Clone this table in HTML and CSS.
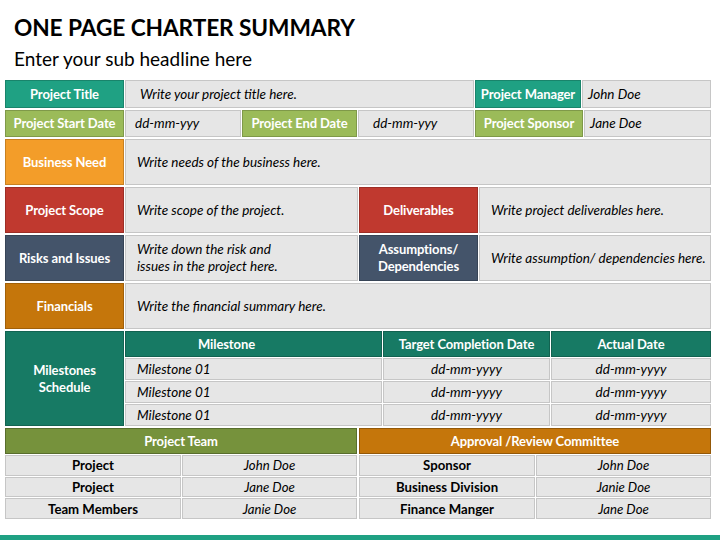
FILE: index.html
```html
<!DOCTYPE html>
<html>
<head>
<meta charset="utf-8">
<link rel="stylesheet" href="styles.css">
</head>
<body>
<div class="page">
  <h1 class="title">ONE PAGE CHARTER SUMMARY</h1>
  <p class="sub">Enter your sub headline here</p>

  <div class="sheet">
    <div class="row r1">
      <div class="lab teal">Project Title</div>
      <div class="val pad14">Write your project title here.</div>
      <div class="lab teal">Project Manager</div>
      <div class="val pad5">John Doe</div>
    </div>

    <div class="row r2">
      <div class="lab green">Project Start Date</div>
      <div class="val pad9">dd-mm-yyy</div>
      <div class="lab green">Project End Date</div>
      <div class="val pad14">dd-mm-yyy</div>
      <div class="lab green">Project Sponsor</div>
      <div class="val pad5">Jane Doe</div>
    </div>

    <div class="row r3">
      <div class="lab orange">Business Need</div>
      <div class="val pad12">Write needs of the business here.</div>
    </div>

    <div class="row r4">
      <div class="lab red">Project Scope</div>
      <div class="val pad12">Write scope of the project.</div>
      <div class="lab red">Deliverables</div>
      <div class="val pad12">Write project deliverables here.</div>
    </div>

    <div class="row r4">
      <div class="lab slate">Risks and Issues</div>
      <div class="val pad12">Write down the risk and<br>issues in the project here.</div>
      <div class="lab slate">Assumptions/<br>Dependencies</div>
      <div class="val pad12">Write assumption/ dependencies here.</div>
    </div>

    <div class="row r3">
      <div class="lab amber">Financials</div>
      <div class="val pad12">Write the financial summary here.</div>
    </div>

    <div class="row ms">
      <div class="lab dteal">Milestones<br>Schedule</div>
      <div class="mtable">
        <div class="mh mh-first">Milestone</div>
        <div class="mh">Target Completion Date</div>
        <div class="mh">Actual Date</div>
        <div class="mc left">Milestone 01</div>
        <div class="mc">dd-mm-yyyy</div>
        <div class="mc">dd-mm-yyyy</div>
        <div class="mc left">Milestone 01</div>
        <div class="mc">dd-mm-yyyy</div>
        <div class="mc">dd-mm-yyyy</div>
        <div class="mc left">Milestone 01</div>
        <div class="mc">dd-mm-yyyy</div>
        <div class="mc">dd-mm-yyyy</div>
      </div>
    </div>

    <div class="row team">
      <div class="ttable tleft">
        <div class="th olive">Project Team</div>
        <div class="tk">Project</div><div class="tv">John Doe</div>
        <div class="tk">Project</div><div class="tv">Jane Doe</div>
        <div class="tk">Team Members</div><div class="tv">Janie Doe</div>
      </div>
      <div class="ttable tright">
        <div class="th amber">Approval /Review Committee</div>
        <div class="tk">Sponsor</div><div class="tv">John Doe</div>
        <div class="tk">Business Division</div><div class="tv">Janie Doe</div>
        <div class="tk">Finance Manger</div><div class="tv">Jane Doe</div>
      </div>
    </div>
  </div>
</div>
<div class="bar"></div>
</body>
</html>
```
FILE: styles.css
```css
* { box-sizing: border-box; }
html, body { margin: 0; padding: 0; background: #ffffff; }
body {
  width: 720px;
  height: 540px;
  overflow: hidden;
  position: relative;
  font-family: Lato, "Open Sans", sans-serif;
  color: #000;
}
.page { padding: 0; }
.title {
  margin: 0;
  padding: 13px 0 0 14px;
  font-size: 22.7px;
  line-height: 29px;
  font-weight: 700;
  letter-spacing: -0.1px;
}
.sub {
  margin: 0;
  padding: 4px 0 0 14px;
  font-size: 19px;
  line-height: 25px;
  font-weight: 400;
}
.sheet {
  margin: 9px 0 0 5px;
  width: 706px;
  display: flex;
  flex-direction: column;
  gap: 2px;
}
.row { display: grid; gap: 1px; }
.r1 { grid-template-columns: 119px 349px 106px 1fr; height: 28px; }
.r2 { grid-template-columns: 119px 116px 115px 116px 108px 1fr; height: 27px; }
.r3 { grid-template-columns: 119px 1fr; height: 46px; }
.r4 { grid-template-columns: 119px 233px 119px 1fr; height: 46px; }
.ms { grid-template-columns: 119px 1fr; height: 95px; }
.team { grid-template-columns: 352px 1fr; gap: 2px; height: 91px; }

.lab {
  display: flex;
  align-items: center;
  justify-content: center;
  text-align: center;
  color: #ffffff;
  font-weight: 700;
  font-size: 13px;
  line-height: 17px;
  border: 1px solid rgba(0,0,0,0.18);
  letter-spacing: -0.1px;
}
.val {
  display: flex;
  align-items: center;
  background: #e6e6e6;
  border: 1px solid #c6c6c6;
  font-style: italic;
  font-size: 13.5px;
  line-height: 17px;
}
.pad5 { padding-left: 5px; }
.pad9 { padding-left: 9px; }
.pad12 { padding-left: 11px; }
.pad14 { padding-left: 14px; }

.teal { background: #1fa183; }
.green { background: #9bbb59; }
.orange { background: #f39d29; }
.red { background: #c0392f; }
.slate { background: #44546a; }
.amber { background: #c5760b; }
.dteal { background: #177a64; }
.olive { background: #76923c; }

.mtable {
  display: grid;
  grid-template-columns: 257px 167px 1fr;
  grid-template-rows: 26px 1fr 1fr 1fr;
  gap: 1px;
}
.mh {
  background: #177a64;
  color: #fff;
  font-weight: 700;
  font-size: 13px;
  letter-spacing: -0.1px;
  display: flex;
  align-items: center;
  justify-content: center;
  border: 1px solid #126250;
}
.mh-first { padding-right: 54px; }
.mc {
  background: #e6e6e6;
  border: 1px solid #c6c6c6;
  font-style: italic;
  font-size: 13.5px;
  display: flex;
  align-items: center;
  justify-content: center;
}
.mc.left { justify-content: flex-start; padding-left: 11px; }

.ttable {
  display: grid;
  grid-template-columns: 176px 1fr;
  grid-template-rows: 26px 1fr 1fr 1fr;
  gap: 1px;
}
.tright { grid-template-columns: 176px 1fr; }
.th {
  grid-column: 1 / 3;
  color: #fff;
  font-weight: 700;
  font-size: 13px;
  letter-spacing: -0.1px;
  display: flex;
  align-items: center;
  justify-content: center;
  border: 1px solid rgba(0,0,0,0.25);
}
.tk, .tv {
  background: #e6e6e6;
  border: 1px solid #c6c6c6;
  font-size: 13.2px;
  display: flex;
  align-items: center;
  justify-content: center;
}
.tk { font-weight: 700; }
.tv { font-style: italic; }

.bar {
  position: absolute;
  left: 0;
  right: 0;
  bottom: 0;
  height: 5px;
  background: #1fa183;
}
```
